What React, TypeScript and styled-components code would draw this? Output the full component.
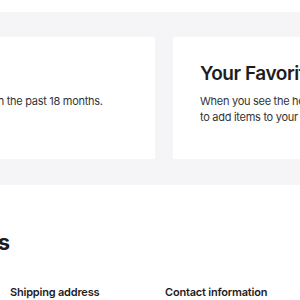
import React from "react";
import styled, { createGlobalStyle } from "styled-components";

const Global = createGlobalStyle`
  html, body { margin: 0; padding: 0; background: #ffffff; }
  body { font-family: Inter, "Noto Sans", sans-serif; color: #1d1d1f; -webkit-font-smoothing: antialiased; }
  * { box-sizing: border-box; }
`;

const Viewport = styled.div`
  width: 300px;
  height: 300px;
  overflow: hidden;
  padding-top: 12px;
`;

const Canvas = styled.div`
  width: 1000px;
  margin-left: -170px;
`;

const Band = styled.section`
  background: #f5f5f7;
  padding: 25px 0 26px 26px;
`;

const CardRow = styled.div`
  display: flex;
  gap: 18px;
`;

const Card = styled.article`
  width: 299px;
  height: 122px;
  background: #ffffff;
  padding: 25px 27px;
  flex: none;
`;

const CardTitle = styled.h2`
  margin: 0;
  font-size: 19px;
  line-height: 24px;
  font-weight: 600;
  letter-spacing: -0.45px;
  color: #1d1d1f;
  white-space: nowrap;
`;

const CardText = styled.p`
  margin: 7px 0 0;
  font-size: 11px;
  line-height: 16px;
  letter-spacing: -0.28px;
  color: #333336;
  white-space: nowrap;
`;

const Section = styled.section`
  padding-top: 43px;
`;

const SectionTitle = styled.h2`
  margin: 0;
  font-size: 22px;
  line-height: 28px;
  font-weight: 700;
  letter-spacing: -0.3px;
  color: #1d1d1f;
  white-space: nowrap;
`;

const DetailGrid = styled.div`
  display: grid;
  grid-template-columns: repeat(4, 155px);
  margin-top: 28px;
  padding-left: 25px;
`;

const DetailLabel = styled.h3`
  margin: 0;
  font-size: 11px;
  line-height: 16px;
  font-weight: 600;
  letter-spacing: -0.2px;
  color: #1d1d1f;
  white-space: nowrap;
`;

export default function App() {
  return (
    <>
      <Global />
      <Viewport>
        <Canvas>
          <Band>
            <CardRow>
              <Card>
                <CardTitle>Your Orders</CardTitle>
                <CardText>View purchases made in the past 18 months.</CardText>
              </Card>
              <Card>
                <CardTitle>Your Favorites</CardTitle>
                <CardText>
                  When you see the heart icon, tap it
                  <br />
                  to add items to your list.
                </CardText>
              </Card>
            </CardRow>
          </Band>
          <Section>
            <SectionTitle>Account Settings</SectionTitle>
            <DetailGrid>
              <DetailLabel>Name</DetailLabel>
              <DetailLabel>Shipping address</DetailLabel>
              <DetailLabel>Contact information</DetailLabel>
              <DetailLabel>Payment</DetailLabel>
            </DetailGrid>
          </Section>
        </Canvas>
      </Viewport>
    </>
  );
}
